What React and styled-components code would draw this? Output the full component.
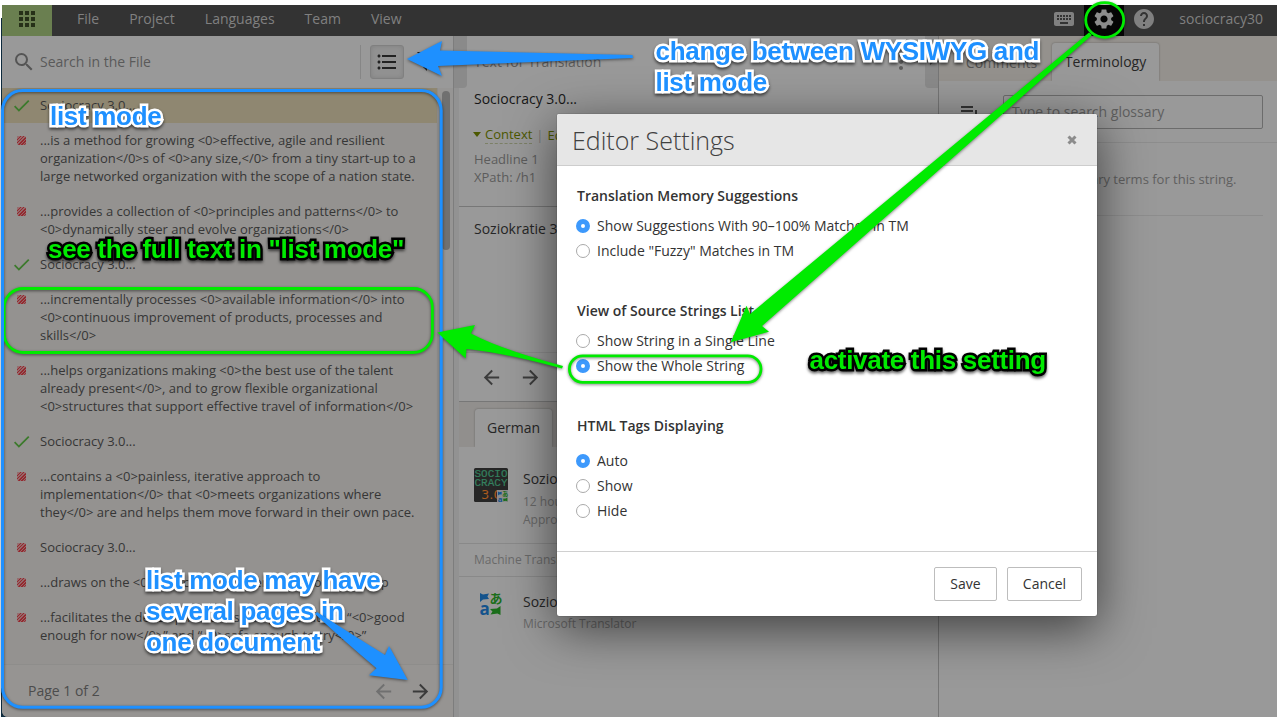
import React from 'react';
import styled, { createGlobalStyle, css } from 'styled-components';
import {
  MdApps, MdKeyboard, MdSettings, MdHelp, MdSearch, MdFormatListBulleted,
  MdArrowBack, MdArrowForward, MdCheck, MdMoreVert,
} from 'react-icons/md';

const Global = createGlobalStyle`
  * { box-sizing: border-box; }
  body { margin: 0; background: #fff; overflow: hidden; }
  svg { display: block; flex: none; overflow: visible; }
`;

const Screen = styled.div`
  position: relative;
  width: 1277px;
  height: 717px;
  padding: 5px 0 0 2px;
  overflow: hidden;
  background: #fff;
  font: 14px/18px 'Open Sans', sans-serif;
  color: #333;
`;
const DesktopEdge = styled.div`
  position: absolute;
  left: 1px;
  top: 18px;
  bottom: 0;
  width: 12px;
  background: #0d2a3d;
`;
const Window = styled.div`
  position: relative;
  display: flex;
  flex-direction: column;
  height: 712px;
  background: #999;
  border-bottom-left-radius: 6px;
  overflow: hidden;
`;

/* Top bar */
const TopBar = styled.header`
  display: flex;
  align-items: center;
  flex: none;
  height: 31px;
  padding-right: 14px;
  background: #333;
  color: #808080;
`;
const AppsButton = styled.div`
  display: flex;
  align-items: center;
  justify-content: center;
  width: 50px;
  height: 31px;
  padding-bottom: 3px;
  margin-right: 25px;
  background: #6a7f50;
  color: #263018;
`;
const Menu = styled.nav`
  display: flex;
  gap: 30px;
  flex: 1;
  padding-bottom: 4px;
`;
const BarIcon = styled.div`
  display: flex;
  align-items: center;
  justify-content: center;
  width: 40px;
  height: 31px;
  padding-bottom: 3px;
  color: ${(p) => (p.$active ? '#8c8c8c' : '#808080')};
  background: ${(p) => (p.$active ? '#050505' : 'transparent')};
`;
const UserName = styled.div`
  padding: 0 0 4px 15px;
`;

const Columns = styled.div`
  display: grid;
  grid-template-columns: 452px 485px 1fr;
  flex: 1;
  min-height: 0;
`;

/* Source strings */
const Sidebar = styled.aside`
  display: flex;
  flex-direction: column;
  min-height: 0;
  border-right: 1px solid #7d7d7d;
`;
const SearchBar = styled.div`
  display: flex;
  align-items: center;
  flex: none;
  height: 52px;
  padding: 0 0 0 10px;
  color: #555;
`;
const SearchText = styled.div`
  flex: 1;
  margin-left: 4px;
  color: #5a5a5a;
`;
const Tools = styled.div`
  display: flex;
  align-items: center;
  height: 34px;
  width: 93px;
  padding-left: 9px;
  gap: 9px;
  border-left: 1px solid #868686;
  color: #222;
`;
const ToolButton = styled.div`
  display: flex;
  align-items: center;
  justify-content: center;
  width: 34px;
  height: 34px;
  border: 1px solid #808080;
  border-radius: 3px;
  background: #919191;
  box-shadow: inset 0 0 4px rgba(0, 0, 0, 0.12);
`;
const ListArea = styled.div`
  display: flex;
  flex: 1;
  min-height: 0;
  background: #969594;
`;
const StringList = styled.div`
  width: 436px;
  background: #949290;
  overflow: hidden;
  border-right: 1px solid #8e8d8c;
`;
const ScrollThumb = styled.div`
  width: 8px;
  height: 159px;
  margin: 3px 0 0 4px;
  border-radius: 4px;
  background: #707070;
`;
const StringRow = styled.div`
  display: flex;
  padding: 8.5px 0;
  background: ${(p) => (p.$selected ? '#8f8771' : 'transparent')};
  font-size: 13px;
  line-height: 18px;
`;
const RowMark = styled.div`
  display: flex;
  align-items: center;
  justify-content: center;
  width: 38px;
  height: 18px;
  color: #3c7a2c;
`;
const Untranslated = styled.span`
  width: 9px;
  height: 9px;
  border-radius: 2px;
  background: repeating-linear-gradient(135deg, #94282e 0 1.2px, #95686a 1.2px 2.2px);
`;
const RowText = styled.div`
  margin: -1px 0 1px;
  white-space: pre;
  color: #363636;
`;
const Pager = styled.div`
  display: flex;
  align-items: center;
  flex: none;
  height: 53px;
  padding: 0 21px 0 26px;
  background: #969492;
  border-top: 1px solid #8e8d8b;
  color: #4c4c4c;
`;
const PagerArrows = styled.div`
  display: flex;
  gap: 14px;
  margin-left: auto;
  svg:first-child { color: #707070; }
  svg:last-child { color: #3a3a3a; }
`;

/* Translation column */
const Editor = styled.main`
  position: relative;
  padding-left: 5px;
  background: linear-gradient(to right, #929292 5px, #999 5px);
  border-right: 1px solid #767676;
`;
const PanelToggle = styled.div`
  position: absolute;
  top: 0;
  ${(p) => (p.$side === 'left' ? css`left: 0;` : css`right: 0;`)}
  display: flex;
  align-items: center;
  justify-content: center;
  width: 13px;
  height: 52px;
  background: #8a8a8a;
  border-radius: ${(p) => (p.$side === 'left' ? '0 0 4px 0' : '0 0 0 4px')};
`;
const Toggle = styled.span`
  border: 3px solid transparent;
  border-left: 4px solid #444;
  border-right: 0;
`;
const EditorHead = styled.div`
  display: flex;
  align-items: center;
  justify-content: space-between;
  height: 52px;
  padding: 0 25px 0 15px;
  color: #5c5c5c;
`;
const SourceBlock = styled.section`
  height: 119px;
  padding: 2px 15px 0;
  border-bottom: 1px solid #777;
`;
const SourceText = styled.div`
  color: #161616;
`;
const ContextLine = styled.div`
  display: flex;
  align-items: center;
  height: 19px;
  margin: 17px 0 6px;
  font-size: 13px;
  color: #4c5800;
  i { border: 4px solid transparent; border-top: 5px solid #4c5800; border-bottom: 0; margin-right: 4px; margin-left: -1px; }
  span { border-bottom: 1px dashed #7c8066; height: 19px; }
  b { font-weight: 400; color: #777; margin: 0 4px; }
`;
const Muted = styled.div`
  font-size: ${(p) => p.$size || 14}px;
  color: ${(p) => p.$color || '#5c5c5c'};
`;
const TargetBlock = styled.section`
  height: 146px;
  padding: 13px 15px;
  border-bottom: 1px solid #8d8d8d;
  color: #262626;
`;
const NavBlock = styled.div`
  display: flex;
  align-items: center;
  gap: 16px;
  height: 49px;
  padding-left: 21px;
  border-bottom: 1px solid #777;
  color: #3c3c3c;
`;
const TabStrip = styled.div`
  display: flex;
  align-items: flex-end;
  height: ${(p) => p.$h}px;
  padding-left: ${(p) => p.$pad}px;
  background: ${(p) => p.$bg};
`;
const Tab = styled.div`
  height: ${(p) => (p.$on ? 38 : 37)}px;
  width: ${(p) => p.$w}px;
  text-align: center;
  line-height: 37px;
  border-radius: 3px 3px 0 0;
  color: ${(p) => (p.$on ? '#262626' : '#555')};
  ${(p) => p.$on && css`background: #999; box-shadow: 0 0 2px rgba(0, 0, 0, 0.35);`}
  clip-path: inset(-3px -3px 0 -3px);
`;
const Suggestion = styled.div`
  display: flex;
  gap: 15px;
  height: ${(p) => p.$h}px;
  padding: ${(p) => p.$top}px 15px 0;
  color: #262626;
  ${(p) => p.$line && css`border-bottom: 1px solid #898989;`}
`;
const SuggestionTitle = styled.div`
  padding-top: 2px;
  margin-bottom: ${(p) => p.$gap}px;
`;
const GroupTitle = styled.div`
  height: 33px;
  padding: 7px 15px 0;
  font-size: 12px;
  border-bottom: 1px solid #898989;
  color: #6a6a6a;
`;

/* Glossary column */
const Glossary = styled.aside`
  min-width: 0;
`;
const GlossarySearch = styled.div`
  display: flex;
  align-items: flex-start;
  gap: 24px;
  height: 62px;
  padding: 14px 14px 0 22px;
  border-bottom: 1px solid #8d8d8d;
`;
const GlossaryInput = styled.div`
  width: 260px;
  height: 34px;
  padding-left: 8px;
  line-height: 32px;
  border: 1px solid #6c6c6c;
  border-radius: 2px;
  color: #5f5f5f;
`;
const GlossaryEmpty = styled.div`
  height: 73px;
  margin-right: 14px;
  padding: 27px 0 0 14px;
  text-align: center;
  font-size: 13px;
  border-bottom: 1px solid #8d8d8d;
  color: #606060;
`;

/* Dialog */
const Dialog = styled.div`
  position: absolute;
  left: 557px;
  top: 114px;
  width: 540px;
  height: 502px;
  display: flex;
  flex-direction: column;
  border-radius: 2px;
  background: #fff;
  box-shadow: 0 0 1px rgba(0, 0, 0, 0.7), 0 12px 50px rgba(0, 0, 0, 0.6);
`;
const DialogHead = styled.div`
  display: flex;
  align-items: center;
  justify-content: space-between;
  height: 52px;
  padding: 0 20px 0 15px;
  border-bottom: 1px solid #cdcdcd;
  border-radius: 2px 2px 0 0;
  background: #e6e6e6;
  color: #404040;
  font-size: 25px;
  font-weight: 300;
`;
const DialogBody = styled.div`
  flex: 1;
  padding: 21px 19px 0;
`;
const Group = styled.section`
  height: 115px;
`;
const GroupName = styled.h3`
  margin: 0 0 ${(p) => p.$gap}px 1px;
  font-size: 14px;
  font-weight: 600;
  line-height: 18px;
`;
const Option = styled.label`
  display: flex;
  align-items: center;
  gap: 7px;
  height: 25px;
`;
const Radio = styled.span`
  width: 14px;
  height: 14px;
  border-radius: 50%;
  border: ${(p) => (p.$on ? '5px solid #3d99fc' : '1px solid #aaa')};
  background: #fff;
`;
const DialogFoot = styled.div`
  display: flex;
  justify-content: flex-end;
  gap: 10px;
  height: 65px;
  padding: 15px 15px 0;
  border-top: 1px solid #d0d0d0;
`;
const Button = styled.div`
  width: ${(p) => p.$w}px;
  height: 34px;
  line-height: 32px;
  text-align: center;
  border: 1px solid #bdbdbd;
  border-radius: 2px;
`;

/* Annotations */
const Marks = styled.svg`
  position: absolute;
  left: 0;
  top: 0;
  filter: drop-shadow(0 1px 1.5px rgba(0, 0, 0, 0.5));
`;
const Note = styled.div`
  position: absolute;
  left: ${(p) => p.$x}px;
  top: ${(p) => p.$y}px;
  white-space: pre;
  font: bold 26px/31px 'Liberation Sans', Arial, sans-serif;
  letter-spacing: -0.3px;
  color: ${(p) => (p.$green ? '#00eb00' : '#1e90ff')};
  -webkit-text-stroke: 5px ${(p) => (p.$green ? '#000' : '#fff')};
  paint-order: stroke fill;
  filter: drop-shadow(0 2px 1.5px rgba(0, 0, 0, 0.6));
`;

const strings = [
  ['ok', 'Sociocracy 3.0...'],
  ['no', '...is a method for growing <0>effective, agile and resilient\norganization</0>s of <0>any size,</0> from a tiny start-up to a\nlarge networked organization with the scope of a nation state.'],
  ['no', '...provides a collection of <0>principles and patterns</0> to\n<0>dynamically steer and evolve organizations</0>'],
  ['ok', 'Sociocracy 3.0...'],
  ['no', '...incrementally processes <0>available information</0> into\n<0>continuous improvement of products, processes and\nskills</0>'],
  ['no', '...helps organizations making <0>the best use of the talent\nalready present</0>, and to grow flexible organizational\n<0>structures that support effective travel of information</0>'],
  ['ok', 'Sociocracy 3.0...'],
  ['no', '...contains a <0>painless, iterative approach to\nimplementation</0> that <0>meets organizations where\nthey</0> are and helps them move forward in their own pace.'],
  ['no', 'Sociocracy 3.0...'],
  ['no', '...draws on the <0>collective intelligence</0> of the group'],
  ['no', '...facilitates the development of strategies that are “<0>good\nenough for now</0>” and “<0>safe enough to try</0>”'],
];

const settings = [
  { name: 'Translation Memory Suggestions', gap: 8, on: 0, options: ['Show Suggestions With 90–100% Matches in TM', 'Include "Fuzzy" Matches in TM'] },
  { name: 'View of Source Strings List', gap: 8, on: 1, options: ['Show String in a Single Line', 'Show the Whole String'] },
  { name: 'HTML Tags Displaying', gap: 13, on: 0, options: ['Auto', 'Show', 'Hide'] },
];

const TranslatorShapes = () => (
  <>
    <path d="M1 2l3 1.6 6-1-1.6 3L10 8l-6 .6L1 11z" fill="#14538c" />
    <text x="10.5" y="12" fontSize="13" fontWeight="700" fontFamily="'Noto Sans CJK JP', sans-serif" fill="#1b6e1b">あ</text>
    <text x="0.5" y="24" fontSize="17" fontWeight="700" fontFamily="'Open Sans', sans-serif" fill="#14538c">a</text>
    <path d="M21.5 15v9l-3-1.6-7 1.2 2-3-2.5-2.6 7-.6z" fill="#1b6e1b" />
  </>
);

const Avatar = () => (
  <svg width="34" height="34" viewBox="0 0 34 34">
    <rect width="34" height="34" rx="1.5" fill="#262626" />
    <g fontFamily="'Liberation Mono', monospace" fontSize="11" fill="#34805f" stroke="#34805f" strokeWidth="0.2">
      <text x="0.5" y="9">SOCIO</text>
      <text x="0.5" y="18">CRACY</text>
    </g>
    <text x="7" y="31" fontSize="13" fontFamily="'DejaVu Sans', sans-serif" fill="#a85a1e">3.0</text>
    <rect x="23" y="22" width="11" height="12" fill="#8c8c8c" />
    <g transform="translate(23.5 22.5) scale(.46)"><TranslatorShapes /></g>
  </svg>
);

export default function App() {
  return (
    <Screen>
      <Global />
      <DesktopEdge />
      <Window>
        <TopBar>
          <AppsButton><MdApps size={24} /></AppsButton>
          <Menu>
            {['File', 'Project', 'Languages', 'Team', 'View'].map((m) => <span key={m}>{m}</span>)}
          </Menu>
          <BarIcon><MdKeyboard size={24} /></BarIcon>
          <BarIcon $active><MdSettings size={24} /></BarIcon>
          <BarIcon><MdHelp size={24} /></BarIcon>
          <UserName>sociocracy30</UserName>
        </TopBar>
        <Columns>
          <Sidebar>
            <SearchBar>
              <MdSearch size={24} />
              <SearchText>Search in the File</SearchText>
              <Tools>
                <ToolButton><MdFormatListBulleted size={24} /></ToolButton>
                <svg width="20" height="20" viewBox="0 0 20 20"><path d="M4 0h16l-6 8v11l-4-4V8z" fill="#222" /></svg>
              </Tools>
            </SearchBar>
            <ListArea>
              <StringList>
                {strings.map(([state, text], i) => (
                  <StringRow key={i} $selected={i === 0}>
                    <RowMark>{state === 'ok' ? <MdCheck size={21} /> : <Untranslated />}</RowMark>
                    <RowText>{text}</RowText>
                  </StringRow>
                ))}
              </StringList>
              <ScrollThumb />
            </ListArea>
            <Pager>
              Page 1 of 2
              <PagerArrows><MdArrowBack size={23} /><MdArrowForward size={23} /></PagerArrows>
            </Pager>
          </Sidebar>
          <Editor>
            <PanelToggle $side="left"><Toggle /></PanelToggle>
            <PanelToggle $side="right"><Toggle /></PanelToggle>
            <EditorHead>Text for Translation<MdMoreVert size={24} /></EditorHead>
            <SourceBlock>
              <SourceText>Sociocracy 3.0...</SourceText>
              <ContextLine><i /><span>Context</span><b>|</b>Edit</ContextLine>
              <Muted $size={13}>Headline 1</Muted>
              <Muted $size={13}>XPath: /h1</Muted>
            </SourceBlock>
            <TargetBlock>Soziokratie 3.0...</TargetBlock>
            <NavBlock><MdArrowBack size={23} /><MdArrowForward size={23} /></NavBlock>
            <TabStrip $h={45} $pad={16} $bg="#918f8d"><Tab $on $w={77}>German</Tab></TabStrip>
            <Suggestion $h={97} $top={21} $line>
              <Avatar />
              <div>
                <SuggestionTitle $gap={5}>Soziokratie 3.0...</SuggestionTitle>
                <Muted $size={12} $color="#686868">12 hours ago</Muted>
                <Muted $size={12} $color="#686868">Approved</Muted>
              </div>
            </Suggestion>
            <GroupTitle>Machine Translation</GroupTitle>
            <Suggestion $h={80} $top={14}>
              <svg width="34" height="26" viewBox="-5 0 34 26"><TranslatorShapes /></svg>
              <div>
                <SuggestionTitle $gap={4}>Soziokratie 3.0...</SuggestionTitle>
                <Muted $size={12} $color="#686868">Microsoft Translator</Muted>
              </div>
            </Suggestion>
          </Editor>
          <Glossary>
            <TabStrip $h={45} $pad={12} $bg="#94918d">
              <Tab $w={101}>Comments</Tab>
              <Tab $on $w={107}>Terminology</Tab>
            </TabStrip>
            <GlossarySearch>
              <svg width="18" height="24" viewBox="0 0 18 24"><path d="M0 11h12v2H0zM0 15h12v2H0zM0 19h8v2H0zM14 15h2v8h-2z" fill="#333" /></svg>
              <GlossaryInput>Type to search glossary</GlossaryInput>
            </GlossarySearch>
            <GlossaryEmpty>There are no glossary terms for this string.</GlossaryEmpty>
          </Glossary>
        </Columns>
      </Window>

      <Dialog>
        <DialogHead>
          Editor Settings
          <svg width="10" height="10" viewBox="0 0 10 10"><path d="M1.5 1.5l7 7M8.5 1.5l-7 7" stroke="#8c8c8c" strokeWidth="3" /></svg>
        </DialogHead>
        <DialogBody>
          {settings.map((g) => (
            <Group key={g.name}>
              <GroupName $gap={g.gap}>{g.name}</GroupName>
              {g.options.map((o, i) => (
                <Option key={o}><Radio $on={i === g.on} />{o}</Option>
              ))}
            </Group>
          ))}
        </DialogBody>
        <DialogFoot>
          <Button $w={63}>Save</Button>
          <Button $w={75}>Cancel</Button>
        </DialogFoot>
      </Dialog>

      <Note $x={655.5} $y={36}>{'change between WYSIWYG and\nlist mode'}</Note>
      <Note $x={50} $y={101}>list mode</Note>
      <Note $x={146} $y={565}>{'list mode may have\nseveral pages in\none document'}</Note>
      <Note $green $x={48} $y={234}>see the full text in "list mode"</Note>
      <Note $green $x={809.5} $y={345}>activate this setting</Note>
      <Marks width="1277" height="717" viewBox="0 0 1277 717">
        <g fill="none" stroke="#00eb00" strokeWidth="2.8">
          <rect x="4.2" y="288.5" width="428.2" height="64" rx="19" />
          <rect x="569.4" y="355.8" width="191.6" height="26.6" rx="13.3" />
          <ellipse cx="1104.7" cy="20" rx="19" ry="17.4" />
        </g>
        <rect x="2.5" y="90.5" width="438.7" height="616.7" rx="20" fill="none" stroke="#1e90ff" strokeWidth="3" />
        <g fill="#1e90ff">
          <path d="M407 59L442 41L440 50.5L632.5 55L633 58L438 66L442 76Z" />
          <path d="M407.7 680L389 646L385 655Q356 637 317 612L315 614Q343 640 376.5 668.3L369 675.3Z" />
        </g>
        <g fill="#00eb00">
          <path d="M730.8 342.3L746.5 305.7L750 314L1089 32.5L1092 35L762 326L769 331.7Z" />
          <path d="M437.3 332.5L475 325L471 333.5Q500 349 563 366L562 368.5Q500 352 466.5 349L465.7 358.5Z" />
        </g>
      </Marks>
    </Screen>
  );
}
